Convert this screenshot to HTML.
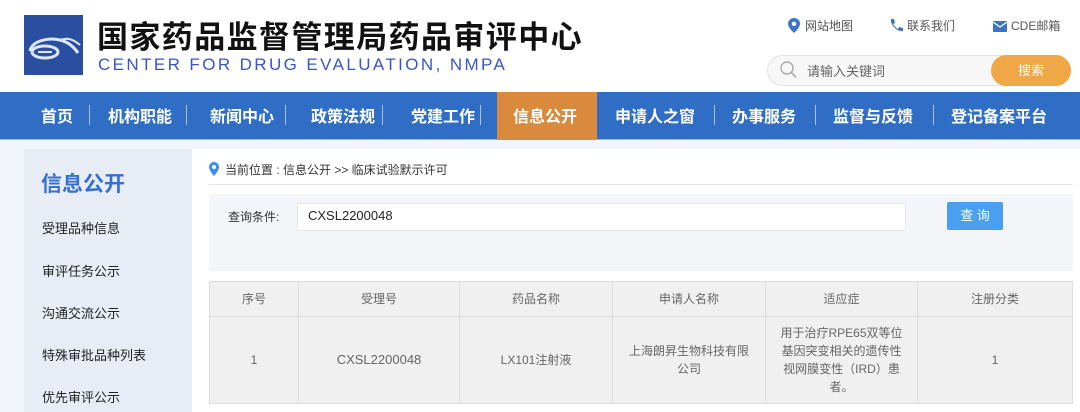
<!DOCTYPE html>
<html><head><meta charset="utf-8"><style>
*{margin:0;padding:0;box-sizing:border-box}
body{width:1080px;height:412px;overflow:hidden;background:#f2f6fc;font-family:"Liberation Sans","Noto Sans CJK SC",sans-serif;position:relative}
.a{position:absolute;white-space:nowrap}
.hdr{position:absolute;left:0;top:0;width:1080px;height:92px;background:#fff}
.nav{position:absolute;left:0;top:92px;width:1080px;height:48px;background:#2f6ec4;border-bottom:1px solid #9bbbe6}
.nav span{position:absolute;top:11px;color:#fff;font-size:16px;font-weight:bold}
.nav i{position:absolute;top:13px;width:1px;height:20px;background:#a8c4ec}
.side{position:absolute;left:24px;top:149px;width:168px;height:263px;background:#e8edf5}
.side div{position:absolute;left:18px;font-size:13px;color:#222}
.main{position:absolute;left:192px;top:149px;width:888px;height:263px;background:#fff}
table{position:absolute;left:209px;top:281px;width:864px;border-collapse:collapse;font-size:12px;color:#666;text-align:center}
td{border:1px solid #dcdcdc;background:#f0f0f0;line-height:18px}
</style></head><body>
<div class="hdr"></div>
<svg class="a" style="left:24px;top:15px" width="59" height="60" viewBox="0 0 59 60">
<rect width="59" height="60" fill="#2b4fa0"/>
<path d="M6 36 C8 26 24 22 36 25 C44 27 50 32 54 38" stroke="#dfe6f3" stroke-width="3" fill="none"/>
<ellipse cx="21" cy="37" rx="13" ry="6" stroke="#dfe6f3" stroke-width="3" fill="none"/>
<path d="M14 37 h14" stroke="#dfe6f3" stroke-width="2"/>
<path d="M36 25 C44 22 50 25 56 30" stroke="#dfe6f3" stroke-width="2" fill="none"/>
</svg>
<div class="a" style="left:97px;top:12px;font-size:31px;font-weight:bold;color:#111;letter-spacing:1.4px">国家药品监督管理局药品审评中心</div>
<div class="a" style="left:98px;top:55px;font-size:17px;color:#3a55c8;letter-spacing:2.4px">CENTER FOR DRUG EVALUATION, NMPA</div>
<svg class="a" style="left:788px;top:18px" width="12" height="15" viewBox="0 0 12 15"><path d="M6 0C2.7 0 0 2.6 0 5.8 0 10 6 15 6 15s6-5 6-9.2C12 2.6 9.3 0 6 0z" fill="#3d74c9"/><circle cx="6" cy="5.8" r="2.2" fill="#fff"/></svg>
<div class="a" style="left:805px;top:17px;font-size:12px;color:#555">网站地图</div>
<svg class="a" style="left:889px;top:18px" width="14" height="15" viewBox="0 0 14 15"><path d="M2 1l3 0 1 4-2 1c1 2 3 4 5 5l1-2 4 1 0 3c-6 1-13-6-12-12z" fill="#3d74c9"/></svg>
<div class="a" style="left:907px;top:17px;font-size:12px;color:#555">联系我们</div>
<svg class="a" style="left:993px;top:21px" width="14" height="11" viewBox="0 0 14 11"><rect width="14" height="11" fill="#3d74c9"/><path d="M0 1l7 5 7-5" stroke="#fff" stroke-width="1.2" fill="none"/></svg>
<div class="a" style="left:1011px;top:17px;font-size:12px;color:#555">CDE邮箱</div>
<div class="a" style="left:767px;top:55px;width:304px;height:31px;border:1px solid #e2e2e2;border-radius:16px;background:#f7f7f7"></div>
<svg class="a" style="left:780px;top:61px" width="17" height="18" viewBox="0 0 17 18"><circle cx="7" cy="7" r="6" stroke="#aaa" stroke-width="1.4" fill="none"/><path d="M11.5 11.5l4.5 5" stroke="#aaa" stroke-width="1.6"/></svg>
<div class="a" style="left:807px;top:61px;font-size:13px;color:#666">请输入关键词</div>
<div class="a" style="left:991px;top:55px;width:80px;height:31px;border-radius:16px;background:#f0a745;color:#fff;font-size:13px;text-align:center;line-height:31px">搜索</div>
<div class="nav">
<div class="a" style="left:497px;top:0;width:100px;height:48px;background:#d98a3c"></div>
<span style="left:41px">首页</span><i style="left:89px"></i>
<span style="left:108px">机构职能</span><i style="left:186px"></i>
<span style="left:210px">新闻中心</span><i style="left:285px"></i>
<span style="left:311px">政策法规</span><i style="left:382px"></i>
<span style="left:411px">党建工作</span><i style="left:480px"></i>
<span style="left:513px">信息公开</span>
<span style="left:615px">申请人之窗</span><i style="left:714px"></i>
<span style="left:732px">办事服务</span><i style="left:815px"></i>
<span style="left:833px">监督与反馈</span><i style="left:933px"></i>
<span style="left:951px">登记备案平台</span>
</div>
<div class="side">
<div style="left:17px;top:19px;font-size:21px;font-weight:bold;color:#3470d0">信息公开</div>
<div style="top:69px">受理品种信息</div>
<div style="top:112px">审评任务公示</div>
<div style="top:154px">沟通交流公示</div>
<div style="top:196px">特殊审批品种列表</div>
<div style="top:238px">优先审评公示</div>
</div>
<div class="main"></div>
<svg class="a" style="left:209px;top:162px" width="10" height="14" viewBox="0 0 10 14"><path d="M5 0C2.2 0 0 2.2 0 5c0 3.6 5 9 5 9s5-5.4 5-9C10 2.2 7.8 0 5 0z" fill="#3d8ef0"/><circle cx="5" cy="5" r="2" fill="#fff"/></svg>
<div class="a" style="left:225px;top:161px;font-size:12px;color:#333">当前位置 : 信息公开 &gt;&gt; 临床试验默示许可</div>
<div class="a" style="left:209px;top:184px;width:864px;height:1px;background:#e4e4e4"></div>
<div class="a" style="left:209px;top:194px;width:864px;height:77px;background:#f3f5f9"></div>
<div class="a" style="left:228px;top:208px;font-size:12px;color:#333">查询条件:</div>
<div class="a" style="left:297px;top:203px;width:609px;height:28px;background:#fff;border:1px solid #e6e6e6;border-radius:2px"></div>
<div class="a" style="left:308px;top:208px;font-size:13px;color:#222">CXSL2200048</div>
<div class="a" style="left:947px;top:202px;width:56px;height:28px;background:#4a9ff0;border-radius:2px;color:#fff;font-size:13px;text-align:center;line-height:28px">查 询</div>
<table>
<tr style="height:35px"><td style="width:89px">序号</td><td style="width:161px">受理号</td><td style="width:153px">药品名称</td><td style="width:153px">申请人名称</td><td style="width:152px">适应症</td><td>注册分类</td></tr>
<tr style="height:87px"><td>1</td><td style="font-size:13px">CXSL2200048</td><td>LX101注射液</td><td>上海朗昇生物科技有限<br>公司</td><td>用于治疗RPE65双等位<br>基因突变相关的遗传性<br>视网膜变性（IRD）患<br>者。</td><td>1</td></tr>
</table>
</body></html>
